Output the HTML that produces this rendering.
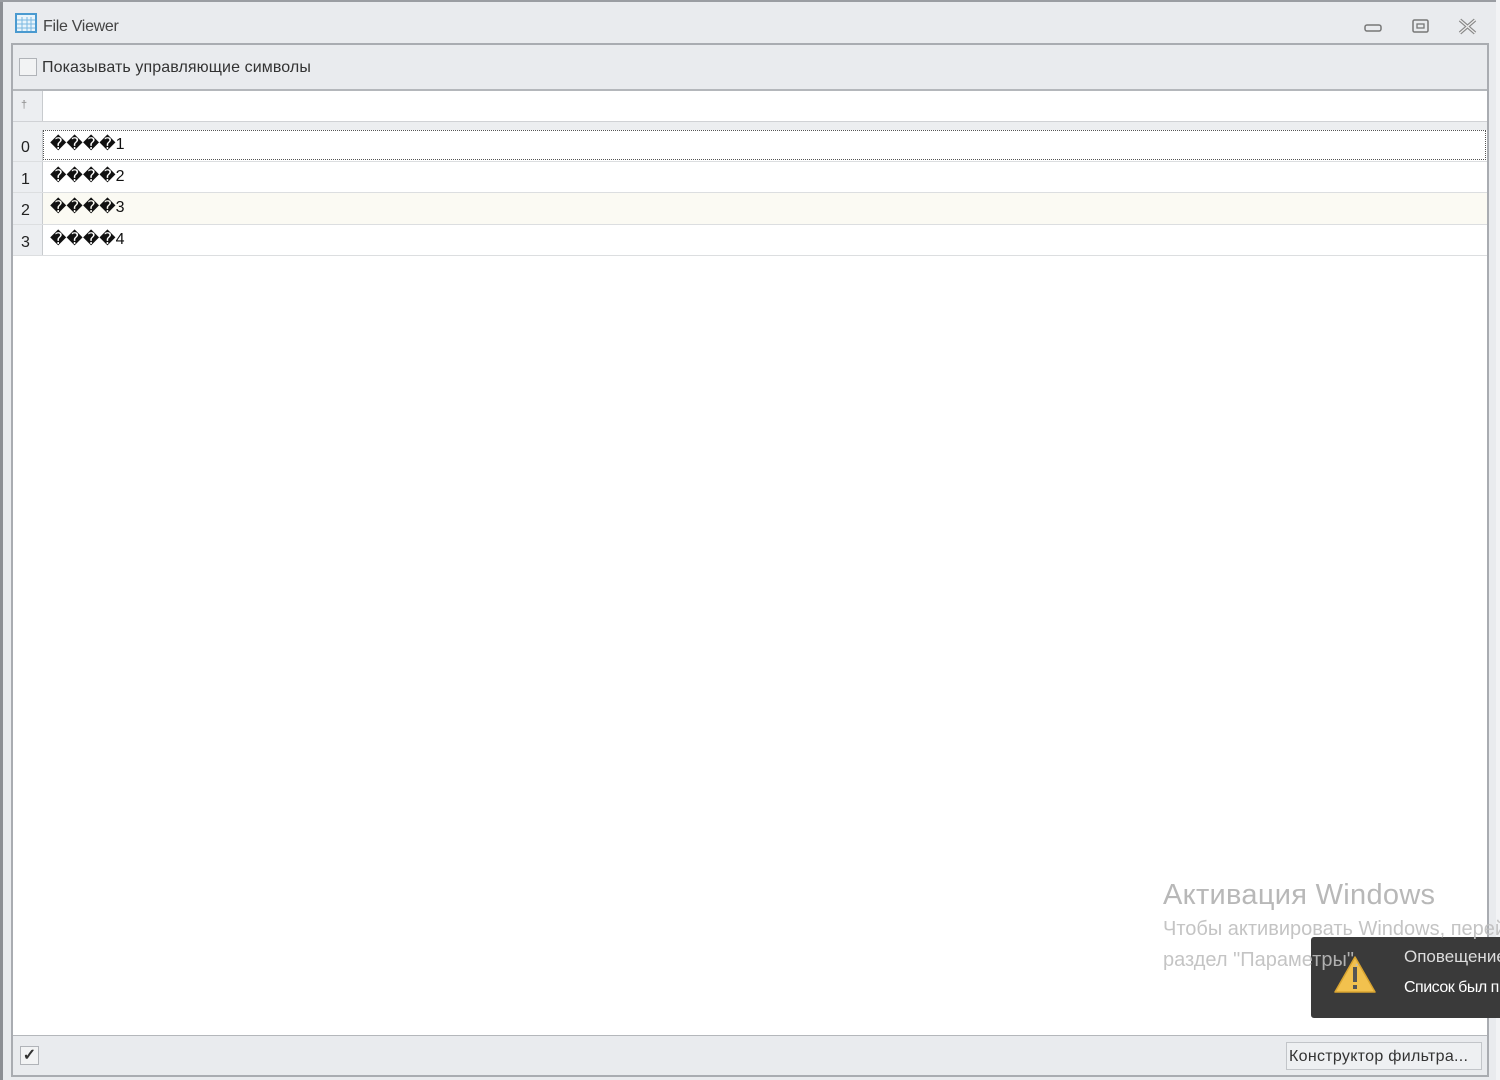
<!DOCTYPE html>
<html><head><meta charset="utf-8"><style>
*{margin:0;padding:0;box-sizing:border-box}
body{width:1500px;height:1080px;background:#e9ebee;font-family:"Liberation Sans",sans-serif;position:relative;overflow:hidden}
.abs{position:absolute}
.t{font-size:16px;color:#333}
</style></head><body>
<div class="abs" style="left:0;top:0;width:3px;height:1080px;background:#8c8f94"></div>
<div class="abs" style="left:0;top:0;width:1500px;height:2px;background:#9a9da2"></div>
<div class="abs" style="left:1496px;top:0;width:4px;height:1080px;background:#f2f3f5"></div>
<svg class="abs" style="left:15px;top:13px" width="22" height="20"><rect x="1" y="1" width="20" height="18" fill="#e8f4fb" stroke="#4a9ad0" stroke-width="2"/><g stroke="#7ab8e0" stroke-width="1"><line x1="2" y1="7" x2="20" y2="7"/><line x1="2" y1="11" x2="20" y2="11"/><line x1="2" y1="15" x2="20" y2="15"/><line x1="7" y1="4" x2="7" y2="18"/><line x1="12" y1="4" x2="12" y2="18"/><line x1="16" y1="4" x2="16" y2="18"/></g></svg>
<div class="abs t" style="left:43px;top:18px;font-size:16px;color:#444;letter-spacing:-0.3px">File Viewer</div>
<svg class="abs" style="left:1360px;top:15px" width="120" height="24"><rect x="5" y="10" width="16" height="6" rx="2" fill="none" stroke="#777" stroke-width="1.5"/><rect x="53" y="5" width="15" height="12" rx="1.5" fill="none" stroke="#777" stroke-width="1.5"/><rect x="57" y="9" width="7" height="4" fill="none" stroke="#777" stroke-width="1.3"/><path d="M100 5 L115 18 M115 5 L100 18" stroke="#888" stroke-width="3.5"/><path d="M100 5 L115 18 M115 5 L100 18" stroke="#eee" stroke-width="1.2"/></svg>
<div class="abs" style="left:11px;top:43px;width:1478px;height:1034px;border:2px solid #a9acb1;background:#e9ebee"></div>
<div class="abs" style="left:19px;top:58px;width:18px;height:18px;border:1px solid #b0b3b8;background:#f2f3f4"></div>
<div class="abs t" style="left:42px;top:59px;letter-spacing:0.1px">Показывать управляющие символы</div>
<div class="abs" style="left:13px;top:89px;width:1474px;height:946px;background:#fff;border-top:2px solid #b4b7bb"></div>
<div class="abs" style="left:13px;top:91px;width:30px;height:31px;background:#eceef1;border-right:1px solid #c8cbce"></div>
<div class="abs" style="left:21px;top:99px;font-size:11px;color:#888">&#x2020;</div>
<div class="abs" style="left:13px;top:121px;width:1474px;height:9px;background:#eceef0;border-top:1px solid #d0d2d5"></div>
<div class="abs" style="left:13px;top:192px;width:1474px;height:32px;background:#fbfaf3"></div>
<div class="abs" style="left:13px;top:130px;width:30px;height:126px;background:#eceef1;border-right:1px solid #c8cbce"></div>
<div class="abs" style="left:13px;top:161px;width:1474px;height:1px;background:#dcdee0"></div>
<div class="abs" style="left:13px;top:192px;width:1474px;height:1px;background:#dcdee0"></div>
<div class="abs" style="left:13px;top:224px;width:1474px;height:1px;background:#dcdee0"></div>
<div class="abs" style="left:13px;top:255px;width:1474px;height:1px;background:#dcdee0"></div>
<div class="abs" style="left:43px;top:130px;width:1443px;height:30px;border:1px dotted #555"></div>
<div class="abs t" style="left:21px;top:139px;color:#222">0</div>
<div class="abs t" style="left:21px;top:171px;color:#222">1</div>
<div class="abs t" style="left:21px;top:202px;color:#222">2</div>
<div class="abs t" style="left:21px;top:234px;color:#222">3</div>
<div class="abs t" style="left:50px;top:134px;color:#111">����1</div>
<div class="abs t" style="left:50px;top:166px;color:#111">����2</div>
<div class="abs t" style="left:50px;top:197px;color:#111">����3</div>
<div class="abs t" style="left:50px;top:229px;color:#111">����4</div>
<div class="abs" style="left:13px;top:1035px;width:1474px;height:40px;background:#e9ebee;border-top:1px solid #b4b7bb"></div>
<div class="abs" style="left:20px;top:1046px;width:19px;height:19px;border:1px solid #b0b3b8;background:#f2f3f4;font-size:16px;line-height:17px;text-align:center;color:#333;font-weight:bold">✓</div>
<div class="abs" style="left:1286px;top:1042px;width:196px;height:28px;border:1px solid #c2c5c9;background:#eef0f2;font-size:16px;color:#333;padding:5px 0 0 2px;white-space:nowrap;letter-spacing:0.3px">Конструктор фильтра...</div>
<div class="abs" style="left:1311px;top:937px;width:189px;height:81px;background:#3a3a3a;border-radius:3px 0 0 3px;overflow:hidden">
<svg class="abs" style="left:22px;top:18px" width="44" height="40"><path d="M22 2 L42 37 L2 37 Z" fill="#f2c14e" stroke="#d9a531" stroke-width="1.5" stroke-linejoin="round"/><rect x="20" y="12" width="4" height="15" fill="#555"/><rect x="20" y="30" width="4" height="4" fill="#555"/></svg>
<div class="abs" style="left:93px;top:10px;font-size:17px;color:#ddd;white-space:nowrap">Оповещение</div>
<div class="abs" style="left:93px;top:42px;font-size:16px;color:#fff;white-space:nowrap;letter-spacing:-0.5px">Список был п</div>
</div>
<div class="abs" style="left:1163px;top:879px;font-size:29px;color:#b8b8b8;white-space:nowrap;letter-spacing:0.3px">Активация Windows</div>
<div class="abs" style="left:1163px;top:918px;font-size:20px;color:rgba(190,190,190,0.9);white-space:nowrap">Чтобы активировать Windows, перейдите в</div>
<div class="abs" style="left:1163px;top:949px;font-size:20px;color:rgba(190,190,190,0.9);white-space:nowrap">раздел "Параметры".</div>
</body></html>
